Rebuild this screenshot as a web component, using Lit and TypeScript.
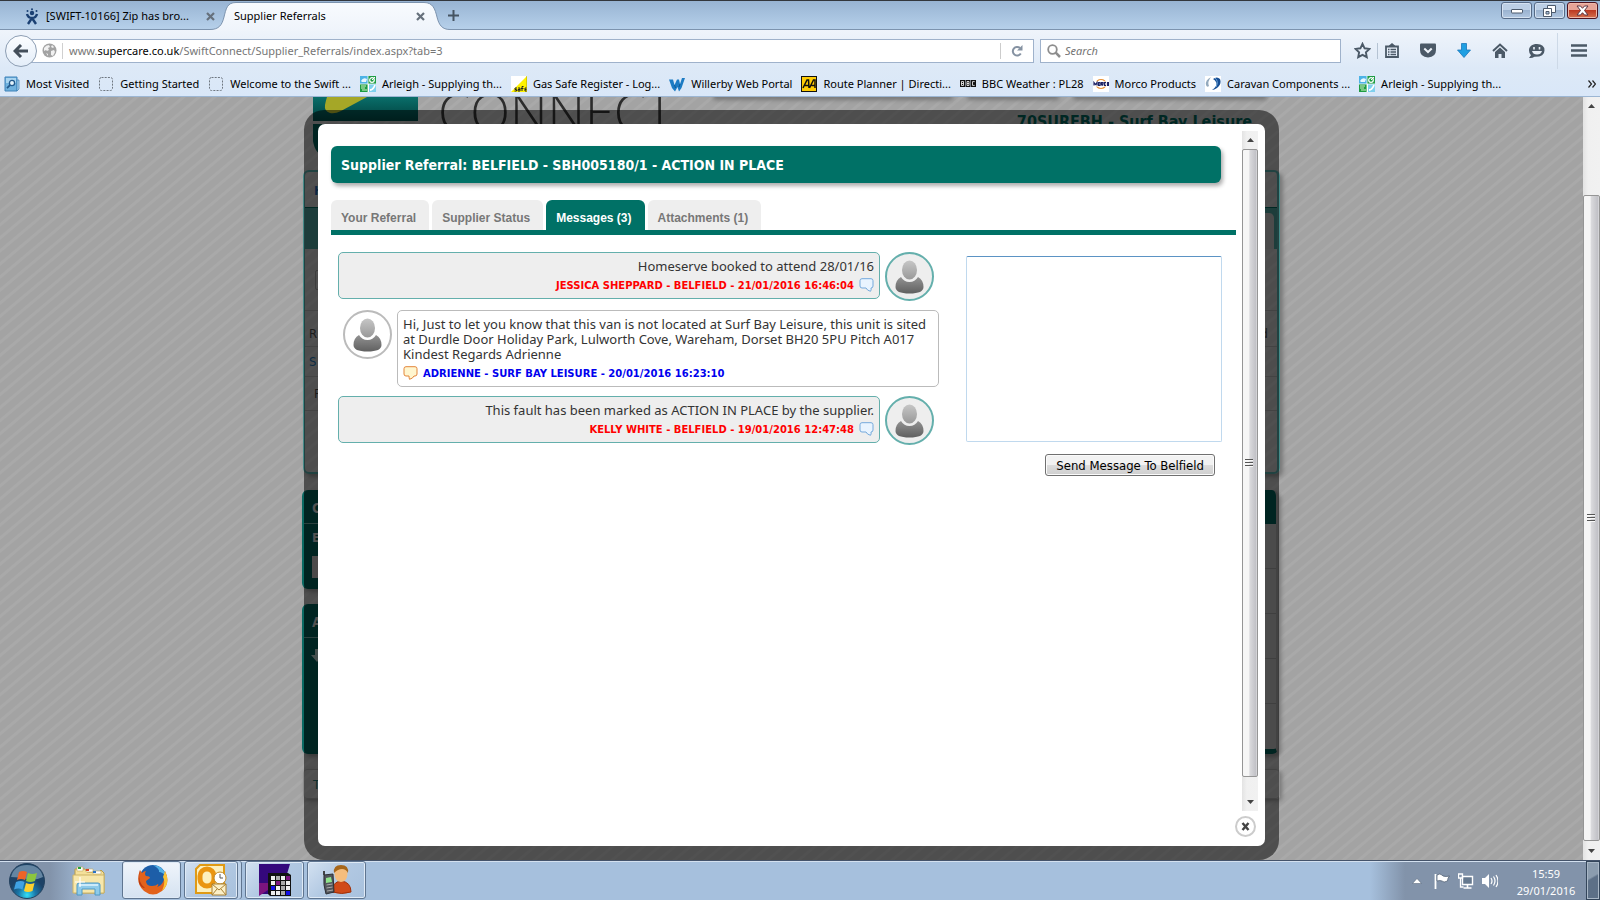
import { LitElement, html, svg, css } from "lit";
import { customElement, property } from "lit/decorators.js";

const icon = (w: number, h: number, body: unknown) =>
  html`<svg width=${w} height=${h} viewBox="0 0 ${w} ${h}" aria-hidden="true">${body}</svg>`;

const favicons: Record<string, unknown> = {
  most: svg`<path d="M1 1h12v14H1z" fill="#6fb1de" stroke="#3f82b8"/><path d="M13 4h2v9l-2 2z" fill="#a8d0ec" stroke="#3f82b8" stroke-width=".7"/><rect x="2" y="2" width="10" height="5" fill="#a9d5f1"/><circle cx="8" cy="7" r="2.6" fill="#e4f3fc" stroke="#22598c" stroke-width="1.3"/><path d="M6 9.2l-3 3" stroke="#22598c" stroke-width="1.7"/>`,
  blank: svg`<rect x="1.5" y="1.5" width="13" height="13" rx="2" fill="none" stroke="#6f7780" stroke-dasharray="2 1.2"/>`,
  arleigh: svg`<rect width="16" height="16" fill="#fff"/><rect width="8" height="8" fill="#4db3e6"/><rect x="8" width="8" height="8" fill="#1d9c43"/><rect y="8" width="8" height="8" fill="#1d9c43"/><rect x="9" y="8" width="7" height="8" fill="#7fd0ee"/><path d="M1 5q2-4 6-2l-1 3H2z" fill="#e9f7ff"/><circle cx="12" cy="4" r="2.3" fill="none" stroke="#fff" stroke-width="1.2"/><path d="M12 4l3-3" stroke="#fff"/><path d="M1 10h5M1 12h4M2 14h5" stroke="#d8f3c8"/><path d="M10 14q3 0 5-5" stroke="#fff" stroke-width="1.8" fill="none"/><path d="M8 0v16M0 8h16" stroke="#fff" stroke-width=".8"/>`,
  gas: svg`<rect width="16" height="16" fill="#fff"/><path d="M16 0v16H0z" fill="#fff200"/><path d="M16 0v16" stroke="#b5a800"/><path d="M3.500 15h2v-1.500h-1.500v-1.500h2M7 12h2v3H7v-1.500h2M11 15v-4.500h1.500M10 12.500h2.500M15.500 15h-1.500v-3h1.500M14 13.500h1.500" fill="none" stroke="#222"/>`,
  willerby: svg`<path d="M0 3.500h4L5.500 9 8 3.500h2L11 8l2-6h3l-3.500 10L10 15.500 8.500 11 6 15.500 3 12z" fill="#1d7cc4"/><path d="M5.500 9l1 3M11 8l-1 3" stroke="#0e5a99"/>`,
  aa: svg`<rect x=".5" y=".5" width="15" height="15" fill="#ffcc05" stroke="#111"/><path d="M2 12l4-8h1.500l.5 8M4 9.500h3.500M8.500 12l4-8H14v8M10.500 9.500H14" fill="none" stroke="#111" stroke-width="1.500"/>`,
  bbc: svg`<path d="M0 4h5v7H0zM5.500 4h5v7h-5zM11 4h5v7h-5z" fill="#111"/><path d="M1.500 5.500v4h2v-4zM1.500 7.500h2M7 5.500v4h2v-4zM7 7.500h2M14.700 5.600H12.500v3.800h2.200" stroke="#fff" stroke-width=".8" fill="none"/>`,
  morco: svg`<rect width="16" height="16" fill="#fff"/><ellipse cx="8" cy="8" rx="5" ry="4.500" fill="none" stroke="#e89339" stroke-width="1.200"/><rect y="5.500" width="16" height="5" fill="#fff"/><path d="M1 9.500v-3l1.500 2 1.500-2v3M5.500 6.500h1.500v3H5.500zM8.500 9.500v-3h1.500v1.500H8.500l1.500 1.500M13 6.700h-1.500v2.600H13M15.500 6.500H14.500v3h1z" fill="none" stroke="#1d2366" stroke-width="1.200"/>`,
  caravan: svg`<rect width="16" height="16" fill="#fff"/><path d="M6 1Q0 4 1 9q1 3 3 1Q2 6 6 1z" fill="#93a9bd"/><path d="M8 3q4-3 7 0 2 5-3 9-3 2-5 2 6-4 4-8-1-2-3-3z" fill="#164e94"/><path d="M10 2q4 3 1 9" stroke="#6fa4d6" fill="none"/>`,
};

const bookmarks: [string, string][] = [
  ["most", "Most Visited"],
  ["blank", "Getting Started"],
  ["blank", "Welcome to the Swift ..."],
  ["arleigh", "Arleigh - Supplying th..."],
  ["gas", "Gas Safe Register - Log..."],
  ["willerby", "Willerby Web Portal"],
  ["aa", "Route Planner | Directi..."],
  ["bbc", "BBC Weather : PL28"],
  ["morco", "Morco Products"],
  ["caravan", "Caravan Components ..."],
  ["arleigh", "Arleigh - Supplying th..."],
];

const chromeFont = css`"Noto Sans", "Open Sans", sans-serif`;

@customElement("browser-chrome")
class BrowserChrome extends LitElement {
  static styles = css`
    :host { display: block; font: 11px/16px ${chromeFont}; color: #000; }
    * { box-sizing: border-box; }
    svg { display: block; flex: none; }
    button { border: 0; background: none; padding: 0; margin: 0; font: inherit; color: inherit; display: grid; place-items: center; }
    .titlebar { display: flex; height: 30px; border-top: 1px solid #33373d; border-bottom: 1px solid #7c93ae; background: linear-gradient(#98b4d3, #b6d0ea); }
    .tab { position: relative; display: flex; align-items: center; height: 30px; }
    .tab.first { width: 210px; padding-left: 24px; gap: 6px; }
    .tab.active { width: 240px; padding-left: 24px; }
    .shape { position: absolute; left: 0; top: 0; }
    .label { position: relative; flex: 1; white-space: nowrap; }
    .close { position: relative; width: 14px; height: 14px; }
    .tab.active .close { margin-right: 23px; }
    .tab.first .close { margin-right: -7px; }
    .newtab { width: 20px; margin: 0 auto 0 -7px; }
    .win { display: flex; gap: 2px; padding: 1px 2px 0 0; }
    .win button { width: 31px; height: 17px; border: 1px solid #566a86; border-radius: 3px; background: linear-gradient(#bccfe5 0 45%, #9bb3d0 50%, #b1c7e0); box-shadow: inset 0 0 0 1px #d5e2f1; }
    .win button.x { border-color: #4d1320; background: linear-gradient(#e6a497 0 45%, #bd3a22 50%, #d4714f); box-shadow: inset 0 0 0 1px #eeb8a9; }
    .nav { display: flex; align-items: center; height: 38px; padding: 3px 5px 0; background: linear-gradient(#eff4fb, #dde9f7); }
    .back { position: relative; z-index: 1; flex: none; width: 32px; height: 32px; border: 1px solid #8d9eb3; border-radius: 50%; background: linear-gradient(#fbfdff, #e4eef9); }
    .field { display: flex; align-items: center; height: 24px; border: 1px solid #9fb2cb; background: #fff; }
    .field.address { flex: 1; margin-left: -9px; padding-left: 13px; }
    .url { flex: 1; margin-left: 5px; padding-left: 6px; border-left: 1px solid #d0d0d0; color: #767676; white-space: nowrap; }
    .url b { font-weight: 400; color: #000; }
    .reload { width: 33px; height: 16px; border-left: 1px solid #ccc; }
    .field.find { width: 301px; margin: 0 8px 0 6px; padding-left: 6px; gap: 4px; }
    .find input { flex: 1; min-width: 0; border: 0; outline: 0; background: none; padding: 0; font: italic 11px/16px ${chromeFont}; }
    .find input::placeholder { color: #737373; opacity: 1; }
    .tools { display: flex; align-items: center; }
    .tools button { width: 36px; height: 24px; }
    .tools .star { width: 26px; }
    .sep { width: 1px; height: 16px; background: #b5c3d3; }
    .tools .sep.list { margin: 0 -4px 0 2px; }
    .tools .sep.tall { height: 36px; margin-left: 3px; background: #cdd9e7; }
    .tools .menu { width: 42px; margin-right: -5px; }
    .marks { display: flex; align-items: center; height: 29px; padding: 3px 4px 0; border-bottom: 1px solid #9cb6d3; background: linear-gradient(#dde9f7, #d9e7f8); }
    .marks a { display: flex; align-items: center; gap: 6px; margin-right: 9px; color: inherit; text-decoration: none; white-space: nowrap; }
    .more { margin-left: auto; }
  `;
  render() {
    const cross = icon(9, 9, svg`<path d="M1 1l7 7M8 1l-7 7" stroke="#66707c" stroke-width="2.200"/>`);
    return html`
      <div class="titlebar">
        <div class="tab first">
          ${icon(16, 17, svg`<g fill="#1b4073"><circle cx="8" cy="5" r="2.200"/><circle cx="3.500" cy="3" r="1"/><circle cx="8" cy="1.300" r="1"/><circle cx="12.500" cy="3" r="1"/></g><path d="M3 6q1 4 5 4t5-4M8 10l-4 6M8 10l4 6" fill="none" stroke="#1b4073" stroke-width="2.400"/>`)}
          <span class="label">[SWIFT-10166] Zip has bro...</span>
          <button class="close" aria-label="Close tab">${cross}</button>
        </div>
        <div class="tab active">
          <svg class="shape" width="240" height="30" viewBox="0 0 240 30" aria-hidden="true">
            <defs><linearGradient id="t" x2="0" y2="1"><stop stop-color="#f8fbfe" /><stop offset="1" stop-color="#eff4fb" /></linearGradient></defs>
            <path d="M0 28.500C9 28.500 12 24 14 16S17 1.500 26 1.500H214C223 1.500 225 8 227 16s5 12.500 13 12.500V30H0z" fill="url(#t)" />
            <path d="M0 28.500C9 28.500 12 24 14 16S17 1.500 26 1.500H214C223 1.500 225 8 227 16s5 12.500 13 12.500" fill="none" stroke="#7c93ae" />
          </svg>
          <span class="label">Supplier Referrals</span>
          <button class="close" aria-label="Close tab">${cross}</button>
        </div>
        <button class="newtab" aria-label="New tab">${icon(11, 11, svg`<path d="M5.500 0v11M0 5.500h11" stroke="#465462" stroke-width="2"/>`)}</button>
        <div class="win">
          <button aria-label="Minimise">${icon(12, 6, svg`<rect x=".5" y="1.500" width="11" height="3.500" rx=".5" fill="#fff" stroke="#4c5a6c"/>`)}</button>
          <button aria-label="Restore">${icon(13, 12, svg`<path d="M4.500.5h8v7h-8z" fill="#fff" stroke="#4c5a6c"/><path d="M.5 3.500h8v8h-8z" fill="#fff" stroke="#4c5a6c"/><path d="M3 6.500h3v2.500H3z" fill="#a8bfda" stroke="#4c5a6c"/>`)}</button>
          <button class="x" aria-label="Close">${icon(13, 11, svg`<path d="M1 1h3.500l2 2.300L8.500 1H12L8.500 5.500 12 10H8.500l-2-2.300L4.500 10H1l3.500-4.500z" fill="#fff" stroke="#5a3440"/>`)}</button>
        </div>
      </div>
      <div class="nav">
        <button class="back" aria-label="Back">${icon(16, 14, svg`<path d="M8 1L2 7l6 6M2.500 7H15" fill="none" stroke="#434e5a" stroke-width="3"/>`)}</button>
        <div class="field address">
          ${icon(15, 15, svg`<circle cx="7.500" cy="7.500" r="7" fill="#a3a3a3"/><path d="M2 5q2-3 5-3l1 2-2 1 1 2-2 1-1-1-2 1zM9 8l3-1 1 2-2 4-2-1zM10 2l2 2-1 1-2-1zM4 10l2 1v2z" fill="#f1f1f1"/>`)}
          <span class="url">www.<b>supercare.co.uk</b>/SwiftConnect/Supplier_Referrals/index.aspx?tab=3</span>
          <button class="reload" aria-label="Reload">${icon(12, 12, svg`<path d="M9.800 8.500A4.300 4.300 0 1 1 9 3" fill="none" stroke="#8592a2" stroke-width="2"/><path d="M11.500 0v5.500H6z" fill="#8592a2"/>`)}</button>
        </div>
        <label class="field find">
          ${icon(14, 14, svg`<circle cx="5.500" cy="5.500" r="4.300" fill="none" stroke="#8d8d8d" stroke-width="1.800"/><path d="M8.700 8.700l4.300 4.300" stroke="#8d8d8d" stroke-width="2.500"/>`)}
          <input type="text" placeholder="Search" aria-label="Search" />
        </label>
        <div class="tools">
          <button class="star" aria-label="Bookmark">${icon(17, 17, svg`<path d="M8.500 1.800l2.100 4.500 4.900.6-3.600 3.400.9 4.900-4.300-2.400-4.300 2.400.9-4.900L1.500 6.900l4.900-.6z" fill="none" stroke="#4b5967" stroke-width="1.900"/>`)}</button>
          <span class="sep list"></span>
          <button aria-label="Bookmarks list">${icon(14, 15, svg`<path d="M1 3.500h12v10.500H1z" fill="none" stroke="#4b5967" stroke-width="1.800"/><path d="M4 2.500L7 0l3 2.500V4H4z" fill="#4b5967"/><path d="M3 6.500h1.500M3 9h1.500M3 11.500h1.500M5.500 6.500H11M5.500 9H11M5.500 11.500H11" stroke="#4b5967" stroke-width="1.300"/>`)}</button>
          <button aria-label="Pocket">${icon(16, 15, svg`<path d="M1 .5h14q1 0 1 1V7q0 7-8 7.500Q0 14 0 7V1.500Q0 .5 1 .5z" fill="#4b5967"/><path d="M4.300 5.500L8 9l3.700-3.500" fill="none" stroke="#eef3fa" stroke-width="2"/>`)}</button>
          <button aria-label="Downloads">${icon(14, 15, svg`<path d="M4.500.5h5V7h4L7 14.500.5 7h4z" fill="#1f9fe2" stroke="#1a77ba" stroke-width=".8"/>`)}</button>
          <button aria-label="Home">${icon(16, 15, svg`<path d="M1 8l7-6.500L15 8" fill="none" stroke="#4b5967" stroke-width="2"/><path d="M3 9l5-4.500L13 9v6H9.500v-4h-3v4H3z" fill="#4b5967"/>`)}</button>
          <button aria-label="Chat">${icon(17, 16, svg`<path d="M9 1C4 1 1 3.500 1 7.500q0 3 2 4.800L1 15q3 .5 5.500-1.200Q16.500 14 16.500 7.500 16.500 1 9 1z" fill="#4b5967"/><path d="M6 4v2.500M11.500 4v2.500" stroke="#e9f0f9" stroke-width="1.600"/><path d="M4 8h10q-1 3.500-5 3.500T4 8z" fill="#e9f0f9"/>`)}</button>
          <span class="sep tall"></span>
          <button class="menu" aria-label="Menu">${icon(16, 13, svg`<path d="M0 1.500h16M0 6.500h16M0 11.500h16" stroke="#4b5967" stroke-width="2.600"/>`)}</button>
        </div>
      </div>
      <nav class="marks" aria-label="Bookmarks">
        ${bookmarks.map(([k, t]) => html`<a href="#">${icon(16, 16, favicons[k])}<span>${t}</span></a>`)}
        <button class="more" aria-label="More bookmarks">${icon(8, 8, svg`<path d="M.5.500L3.500 4l-3 3.500M4.500.500L7.500 4l-3 3.500" fill="none" stroke="#222" stroke-width="1.200"/>`)}</button>
      </nav>
    `;
  }
}

@customElement("scroll-rail")
class ScrollRail extends LitElement {
  @property({ type: Number }) before = 19;
  @property({ type: Number }) after = 19;
  static styles = css`
    :host { display: flex; flex-direction: column; width: 16px; flex: none; background: linear-gradient(90deg, #e3e3e3, #f0f0f0 30%, #f1f1f1); }
    .end { display: flex; flex-direction: column; align-items: center; justify-content: flex-start; padding: 7px 0; box-sizing: border-box; flex: none; }
    .end.down { justify-content: flex-end; }
    .thumb { flex: 1; display: grid; place-items: center; padding-right: 2px; border: 1px solid #959595; border-radius: 2px; background: linear-gradient(90deg, #f6f6f6 0 40%, #d9d9dc 50%, #c2c2c7 90%, #dcdcdf); }
    svg { display: block; }
  `;
  render() {
    return html`
      <div class="end" style="height:${this.before}px">${icon(7, 4, svg`<path d="M3.500 0L7 4H0z" fill="#444"/>`)}</div>
      <div class="thumb">${icon(8, 9, svg`<path d="M0 .5h8M0 3.500h8M0 6.500h8" stroke="#555"/><path d="M0 1.500h8M0 4.500h8M0 7.500h8" stroke="#f8f8f8"/>`)}</div>
      <div class="end down" style="height:${this.after}px">${icon(7, 4, svg`<path d="M0 0h7L3.500 4z" fill="#444"/>`)}</div>
    `;
  }
}

@customElement("site-backdrop")
class SiteBackdrop extends LitElement {
  static styles = css`
    :host { display: block; overflow: hidden; font: 13px/16px "DejaVu Sans Condensed", "DejaVu Sans", sans-serif; color: #3c3c3c; background: repeating-linear-gradient(140deg, #a3a3a3 0 6px, #a9a9a9 7px 9px, #a3a3a3 10px); }
    * { box-sizing: border-box; }
    .site { width: 977px; max-width: 100%; margin: 0 auto; padding: 0 0 20px; }
    .masthead { display: flex; align-items: flex-start; height: 73px; padding: 0 28px 0 10px; }
    .logo { flex: none; display: block; }
    .brand { margin: -16px 0 0 20px; font: 300 52px/60px "Open Sans", sans-serif; color: #2c2c2c; }
    .side { margin-left: auto; text-align: right; }
    .menu { display: flex; gap: 14px; height: 0; justify-content: flex-end; margin-right: -14px; }
    .pill { height: 6px; margin-top: -6px; border-radius: 6px; background: #8d8d8d; box-shadow: 1px 3px 4px #777; width: 194px; }
    .pill.wide { width: 240px; } .pill.small { width: 92px; }
    .dealer { margin: 15px 0 0; font: bold 16px/20px "DejaVu Sans Condensed", "DejaVu Sans", sans-serif; color: #00524a; }
    .panel { height: 304px; border: 2px solid #468a88; border-right-width: 3px; border-radius: 6px; box-shadow: 3px 3px 4px #777; background: #a3a3a32b; }
    .panel .head { height: 36px; padding: 11px 9px 0; border-bottom: 1px solid #00524a; font-weight: bold; color: #17508a; }
    .strip { height: 41px; background: #3e7f7c; padding: 5px 3px 0 0; }
    .inner { height: 36px; border-radius: 5px 5px 0 0; margin-left: 700px; background: #9e9e9e; }
    .row { display: flex; justify-content: space-between; align-items: center; padding: 0 9px 0 4px; border-bottom: 1px solid #8c8c8c; height: 30px; }
    .row.tall { height: 62px; } .row.mid { height: 36px; padding-top: 10px; } .row.low { height: 34px; padding-left: 9px; }
    .row .link { color: #1a5a8c; }
    .chip { width: 30px; height: 20px; margin-left: 6px; border: 1px solid #808080; border-radius: 2px; }
    .cols { display: grid; grid-template-columns: 300px 1fr; gap: 0 20px; margin: 16px 2px 15px -1px; }
    .left { display: grid; gap: 15px; }
    .dark { background: #014b45; border-radius: 6px; color: #a9a9a9; border-left: 2px solid #0b6a63; box-shadow: 3px 3px 4px #777; height: 150px; }
    .dark.short { height: 99px; }
    .dark h2 { margin: 0; height: 34px; padding: 9px 8px; border-bottom: 1px solid #5d8884; font: bold 14px/18px "DejaVu Sans Condensed", sans-serif; }
    .dark p { margin: 0; padding: 6px 8px; font-weight: bold; }
    .dark svg { display: block; margin: 11px 7px; }
    .box { width: 120px; height: 22px; margin: 4px 8px; background: #a09c9c; }
    .listing { border-radius: 6px; border-bottom: 5px solid #014b45; background: #9e9e9e; border-right: 2px solid #8a8a8a; box-shadow: 3px 3px 4px #777; overflow: hidden; }
    .listing .top { height: 34px; background: #014b45; }
    .line { height: 45px; border-bottom: 1px solid #858585; }
    .foot { height: 30px; padding: 7px 9px; border: 1px solid #8b8b8b; border-radius: 4px; box-shadow: 2px 2px 4px #777; color: #1f5f5a; }
  `;
  render() {
    return html`<div class="site">
      <div class="masthead">
        <svg class="logo" width="105" height="60" viewBox="0 0 105 60" aria-hidden="true">
          <defs><linearGradient id="g" x2="0" y2="1"><stop stop-color="#0a6e6a" /><stop offset="1" stop-color="#00403d" /></linearGradient></defs>
          <path d="M0 0h105v24H0z" fill="url(#g)" /><path d="M14 0H54L28 14Q22 17 17 16 11 14 12 8 13 3 14 0z" fill="#a5a727" />
          <path d="M0 27h105v33H14Q2 58 0 44z" fill="#014b45" />
        </svg>
        <div class="brand">CONNECT</div>
        <div class="side">
          <div class="menu"><span class="pill wide"></span><span class="pill small"></span><span class="pill"></span></div>
          <p class="dealer">70SURFBH - Surf Bay Leisure</p>
        </div>
      </div>
      <div class="panel">
        <div class="head">H</div>
        <div class="strip"><div class="inner"></div></div>
        <div class="row tall"><span class="chip"></span></div>
        <div class="row mid"><span>R</span><span>d</span></div>
        <div class="row"><span class="link">S</span></div>
        <div class="row low"><span>F</span></div>
      </div>
      <div class="cols">
        <div class="left">
          <div class="dark short"><h2>C</h2><p>E</p><div class="box"></div></div>
          <div class="dark"><h2>A</h2>${icon(12, 13, svg`<path d="M4 0h4v6h4l-6 7-6-7h4z" fill="#8fa3a1"/>`)}</div>
        </div>
        <div class="listing"><div class="top"></div>${[0, 1, 2, 3].map(() => html`<div class="line"></div>`)}</div>
      </div>
      <div class="foot">T</div>
    </div>`;
  }
}

interface Message { text: string; by: string; mine: boolean }

const messages: Message[] = [
  { text: "Homeserve booked to attend 28/01/16", by: "JESSICA SHEPPARD - BELFIELD - 21/01/2016 16:46:04", mine: false },
  { text: "Hi, Just to let you know that this van is not located at Surf Bay Leisure, this unit is sited at Durdle Door Holiday Park, Lulworth Cove, Wareham, Dorset BH20 5PU Pitch A017 Kindest Regards Adrienne", by: "ADRIENNE - SURF BAY LEISURE - 20/01/2016 16:23:10", mine: true },
  { text: "This fault has been marked as ACTION IN PLACE by the supplier.", by: "KELLY WHITE - BELFIELD - 19/01/2016 12:47:48", mine: false },
];

@customElement("referral-dialog")
class ReferralDialog extends LitElement {
  static styles = css`
    :host { display: block; box-sizing: border-box; padding: 14px; border-radius: 20px; background: #00000085; font: 13px/15px "Noto Sans", "Open Sans", sans-serif; color: #333; }
    * { box-sizing: border-box; }
    svg { display: block; flex: none; }
    .window { display: flex; flex-direction: column; height: 100%; padding: 7px 7px 0 13px; border-radius: 7px; background: #fff; }
    .view { flex: 1; display: flex; min-height: 0; }
    .body { flex: 1; padding: 15px 6px 0 0; }
    h1 { margin: 0 15px 17px 0; padding: 1px 10px 0; border-radius: 6px; background: #007166; color: #fff; font: bold 14px/36px "DejaVu Sans Condensed", "DejaVu Sans", sans-serif; box-shadow: 2px 3px 4px #0005; }
    .tabs { display: flex; gap: 3px; border-bottom: 5px solid #007166; }
    .tabs button { height: 30px; padding: 5px 13px 0 10px; border: 0; border-radius: 6px 6px 0 0; background: #eee; color: #777; font: bold 12px/20px "Liberation Sans", Arial, sans-serif; }
    .tabs button.on { background: #007166; color: #fff; }
    .split { display: flex; justify-content: space-between; padding: 17px 14px 0 7px; }
    .thread { display: flex; flex-direction: column; gap: 9px; width: 601px; }
    .message { display: flex; align-items: flex-start; gap: 5px; }
    .message.mine { padding-left: 5px; }
    .bubble { width: 542px; padding: 6px 5px 2px; border: 1px solid #64afac; border-radius: 5px; background: #eee; text-align: right; }
    .mine .bubble { border-color: #bbb; background: #fff; text-align: left; }
    .by { display: flex; align-items: center; justify-content: flex-end; gap: 5px; height: 22px; font: bold 10px/12px "DejaVu Sans", sans-serif; color: #f00; }
    .by span { padding-top: 2px; }
    .mine .by { flex-direction: row-reverse; color: #00e; }
    .bubble p { margin: 0; }
    .avatar { display: grid; place-items: center; flex: none; width: 49px; height: 49px; border: 2px solid #64afac; border-radius: 50%; background: #eee; }
    .mine .avatar { border-color: #bbb; background: #fff; }
    .reply { display: flex; flex-direction: column; align-items: flex-end; gap: 12px; width: 256px; padding-top: 4px; }
    textarea { display: block; width: 100%; height: 186px; resize: none; border: 1px solid #c0d9ee; border-top-color: #5b93c4; border-radius: 2px; background: #fff; font: inherit; }
    .send { height: 22px; margin-right: 7px; padding: 1px 10px 0; border: 1px solid #707070; border-radius: 3px; background: linear-gradient(#f2f2f2 0 48%, #dcdcdc 52%, #cfcfcf); box-shadow: inset 0 0 0 1px #fbfbfb; color: #000; font: 13px/18px "DejaVu Sans Condensed", "DejaVu Sans", sans-serif; }
    .bar { display: flex; justify-content: flex-end; height: 35px; padding: 5px 2px 0; }
    .shut { display: grid; place-items: center; width: 21px; height: 21px; padding: 0; border: 2px solid #ccc; border-radius: 50%; background: #fff; }
  `;
  person() {
    return icon(29, 34, svg`<defs><linearGradient id="p" x2="0" y2="1"><stop stop-color="#c6c6c6"/><stop offset="1" stop-color="#999"/></linearGradient><linearGradient id="q" x2="0" y2="1"><stop stop-color="#929292"/><stop offset="1" stop-color="#606060"/></linearGradient></defs><ellipse cx="14.500" cy="10" rx="7.500" ry="9.500" fill="url(#p)"/><path d="M6 17q3 5 8.500 5t8.500-5q5.500 3 5.500 10 0 6.500-14 6.500T.5 27Q.5 20 6 17z" fill="url(#q)"/>`);
  }
  balloon(mine: boolean) {
    return mine
      ? icon(15, 14, svg`<path d="M3 .7h9q2 0 2 2V8q0 2-2 2H11q-1 2.500-4.500 3.300Q6 12 6 10H3Q1 10 1 8V2.700q0-2 2-2z" fill="#fff6cf" stroke="#e3863a"/>`)
      : icon(15, 14, svg`<path d="M3 .7h9q2 0 2 2V8q0 2-2 2 .5 2-.5 3.300Q8 12.500 7 10H3Q1 10 1 8V2.700q0-2 2-2z" fill="#e9f4ff" stroke="#74a9dc"/>`);
  }
  message(m: Message) {
    const avatar = html`<span class="avatar">${this.person()}</span>`;
    const bubble = html`<div class="bubble"><p>${m.text}</p><div class="by"><span>${m.by}</span>${this.balloon(m.mine)}</div></div>`;
    return html`<div class="message ${m.mine ? "mine" : ""}">${m.mine ? [avatar, bubble] : [bubble, avatar]}</div>`;
  }
  render() {
    return html`<div class="window">
      <div class="view">
        <div class="body">
          <h1>Supplier Referral: BELFIELD - SBH005180/1 - ACTION IN PLACE</h1>
          <div class="tabs" role="tablist">
            ${["Your Referral", "Supplier Status", "Messages (3)", "Attachments (1)"].map(
              (t, i) => html`<button role="tab" class=${i === 2 ? "on" : ""} aria-selected=${i === 2}>${t}</button>`
            )}
          </div>
          <div class="split">
            <div class="thread">${messages.map((m) => this.message(m))}</div>
            <div class="reply">
              <textarea aria-label="Message"></textarea>
              <button class="send">Send Message To Belfield</button>
            </div>
          </div>
        </div>
        <scroll-rail before="18" after="34"></scroll-rail>
      </div>
      <div class="bar"><button class="shut" aria-label="Close dialog">${icon(9, 9, svg`<path d="M1.500 1l6 7M7.500 1l-6 7" stroke="#444" stroke-width="2.400"/>`)}</button></div>
    </div>`;
  }
}

@customElement("task-bar")
class TaskBar extends LitElement {
  static styles = css`
    :host { display: flex; align-items: stretch; height: 40px; box-sizing: border-box; border-top: 1px solid #44536a; font: 11px/17px ${chromeFont}; color: #fff; background: linear-gradient(90deg, #8293aa 50px, #a6c0dd 92px, #a6c0dd calc(100% - 230px), #8293aa calc(100% - 195px)); box-shadow: inset 0 1px #d3e0ef; }
    * { box-sizing: border-box; }
    svg { display: block; flex: none; }
    button { display: grid; place-items: center; padding: 0; border: 0; background: none; flex: none; }
    .start { width: 54px; }
    .files { width: 68px; padding-left: 2px; }
    .apps { display: flex; gap: 3px; flex: 1; padding-bottom: 1px; }
    .app { width: 59px; border: 1px solid #5f7590; border-radius: 3px; background: linear-gradient(135deg, #d3e1f1, #b1c8e2 50%, #a8c1dd); box-shadow: inset 0 0 0 1px #dfeaf6; }
    .app.on { background: linear-gradient(#f0f5fb, #d5e2f1); }
    .app.stack { width: 54px; }
    .app.group { margin-right: 4px; box-shadow: inset 0 0 0 1px #dfeaf6, 3px 0 #bdd1e8, 4px 0 #5f7590; }
    .tray { display: flex; align-items: center; gap: 8px; flex: none; }
    .clock { width: 80px; text-align: center; padding-top: 2px; }
    .desk { width: 14px; border: 1px solid #33455a; background: linear-gradient(150deg, #8b9cae 40%, #5d7087 45%); box-shadow: inset 0 0 0 1px #a9b7c6; }
  `;
  render() {
    return html`
      <button class="start" aria-label="Start">${icon(38, 38, svg`<defs><radialGradient id="o" cy=".9"><stop stop-color="#35e0f8"/><stop offset=".5" stop-color="#1a77a8"/><stop offset="1" stop-color="#1d4266"/></radialGradient></defs><circle cx="19" cy="19" r="17.500" fill="url(#o)" stroke="#24425f"/><path d="M3 15Q6 3 19 3t16 12Q27 19 19 17T3 15z" fill="#9fbdd3" opacity=".55"/><path d="M11 10q4-2 8 0l-2 8q-4-2-8 0z" fill="#ef6427"/><path d="M20 11q4 2 9 0l-2 8q-5 2-9 0z" fill="#8cc63e"/><path d="M8 20q5-2 8.500 0l-2 7.500q-4-2-8.500 0z" fill="#3fa2e4"/><path d="M18 21q4 2 8.500 0l-2 8q-5 2-8.500 0z" fill="#fdd02e"/>`)}</button>
      <button class="files" aria-label="Explorer">${icon(34, 30, svg`<path d="M3 3h10l2 3h12l2-2 3 3v20H3z" fill="#f4e09a" stroke="#b79b4b"/><path d="M5 1h6v4H5zM14 3h7v3h-7zM21 5h8v3h-8z" fill="#fff" stroke="#c5ab60" stroke-width=".6"/><path d="M6 1h3v2H6z" fill="#26a53b"/><path d="M14 3h3v2h-3z" fill="#d94025"/><path d="M21 5h3v2h-3z" fill="#2a73c8"/><path d="M1 9h31v18H1z" fill="#f7e7ab" stroke="#cdb467"/><path d="M5 29V19q0-2 2-2h19q2 0 2 2v10h-5v-6H10v6z" fill="#8ecbea" stroke="#4f98c4"/><path d="M7 19h19" stroke="#dff4ff" stroke-width="1.500"/><path d="M8 11v10M3 16h10" stroke="#fff" stroke-width="1.200"/>`)}</button>
      <div class="apps">
        <button class="app on" aria-label="Firefox">${icon(32, 32, svg`<circle cx="17" cy="14.500" r="13.500" fill="#1d5ea8"/><path d="M17 1q11 1 13 11-4-4-7-4 1-3-6-7z" fill="#53b1e6"/><path d="M29 7q6 12-3 20-9 7-18 0Q-1 19 4 6l2 3q2-2 4-2-2 3 0 5 4 0 4 2l-4 3q0 5 6 5 4 0 6-2 1 1-1 3 8-2 8-16z" fill="#e2621b"/><path d="M29 7q6 12-3 20 4-9 1-14z" fill="#fbc334"/><path d="M4 6q-3 12 5 18-4 0-6-5-1-8 1-13z" fill="#b93a10"/>`)}</button>
        <button class="app stack group" aria-label="Outlook">${icon(34, 32, svg`<path d="M6 1h24v28H2V5z" fill="#fdf0bd" stroke="#e09a14" stroke-width="2"/><rect x="6" y="5" width="14" height="17" rx="7" fill="none" stroke="#ea9510" stroke-width="5"/><circle cx="26" cy="14" r="6" fill="#fff" stroke="#bd8a2a"/><path d="M26 10v4h3" fill="none" stroke="#555"/><path d="M18 20h14v11H18z" fill="#fbf0c8" stroke="#a98032"/><path d="M18 20l7 6 7-6M18 31l5-6M32 31l-5-6" fill="none" stroke="#a98032"/>`)}</button>
        <button class="app" aria-label="Data grid">${icon(32, 32, svg`<path d="M0 0h31l-3 10H10v20H0z" fill="#34087c"/><path d="M0 19h9v7l-9 6z" fill="#7c147f"/><path d="M9 9h20l3 2v21H11l-2-2z" fill="#111"/><g fill="#eee"><path d="M12 12h4v4h-4zM22 12h4v4h-4zM12 17h4v4h-4zM27 17h4v4h-4zM17 22h4v4h-4zM27 22h4v4h-4zM12 27h4v4h-4zM17 27h4v4h-4z"/></g><path d="M17 12h4v4h-4zM22 17h4v4h-4zM22 22h4v4h-4zM22 27h4v4h-4z" fill="#aaa"/><path d="M27 12h4v4h-4zM17 17h4v4h-4z" fill="#7c147f"/><path d="M12 22h4v4h-4zM27 27h4v4h-4z" fill="#1310e8"/>`)}</button>
        <button class="app" aria-label="Phone contacts">${icon(32, 32, svg`<path d="M11 28q0-10 9-11 10 1 10 11-9 3-19 0z" fill="#d04a18" stroke="#9f3009"/><ellipse cx="20" cy="10" rx="6.500" ry="8" fill="#f5bd7d"/><path d="M13 9q-1-8 7-8t7 8q-2-4-6-4t-8 4z" fill="#a7671b"/><path d="M3 11l9-1 1 18-8 2q-3-9-2-19z" fill="#52555b" stroke="#2d3036"/><path d="M5 14l5-1 1 5-6 1z" fill="#8fe48c"/><path d="M5.500 21l6-1M5.500 24l6-1M6 27l6-1" stroke="#aaa"/><path d="M3 11V7" stroke="#333" stroke-width="1.800"/>`)}</button>
      </div>
      <div class="tray">
        ${icon(16, 6, svg`<path d="M7 .5l4.500 5h-9z" fill="#fff" stroke="#4c5c70" stroke-width=".5"/>`)}
        ${icon(16, 16, svg`<path d="M1.500 1v15" stroke="#fff" stroke-width="1.800"/><path d="M3 2q3-2 5 0l1 1q3 1 6.500 0-2 2-2 5-4 2-5.500 0-2-1-5 0z" fill="#fff" stroke="#46566a" stroke-width=".7"/>`)}
        ${icon(16, 16, svg`<path d="M4.500 3.500h10v8h-10z" fill="#66798f" stroke="#fff" stroke-width="1.400"/><path d="M9.500 12v2.500M5.500 15h8" stroke="#fff" stroke-width="1.600"/><path d="M.5 1h4v4h-4zM2.500 5v9h3" fill="none" stroke="#fff" stroke-width="1.300"/>`)}
        ${icon(16, 16, svg`<path d="M0 5h3l4-4v14l-4-4H0z" fill="#fff"/><path d="M9 5q2 3 0 6M11.500 3.500q3 4.500 0 9M14 2q4 6 0 12" fill="none" stroke="#fff" stroke-width="1.200"/>`)}
        <time class="clock">15:59<br />29/01/2016</time>
      </div>
      <button class="desk" aria-label="Show desktop"></button>
    `;
  }
}

@customElement("app-root")
class AppRoot extends LitElement {
  static styles = css`
    :host { display: flex; flex-direction: column; height: 100vh; overflow: hidden; }
    .content { flex: 1; min-height: 0; display: flex; }
    .page { position: relative; flex: 1; display: flex; min-width: 0; overflow: hidden; }
    .rail { width: 17px; }
    site-backdrop { flex: 1; }
    referral-dialog { position: absolute; inset: 13px 0 0; width: 975px; max-width: 100%; margin: 0 auto; }
  `;
  render() {
    return html`
      <browser-chrome></browser-chrome>
      <div class="content">
        <div class="page"><site-backdrop></site-backdrop><referral-dialog></referral-dialog></div>
        <scroll-rail class="rail" before="98" after="19"></scroll-rail>
      </div>
      <task-bar></task-bar>
    `;
  }
}
